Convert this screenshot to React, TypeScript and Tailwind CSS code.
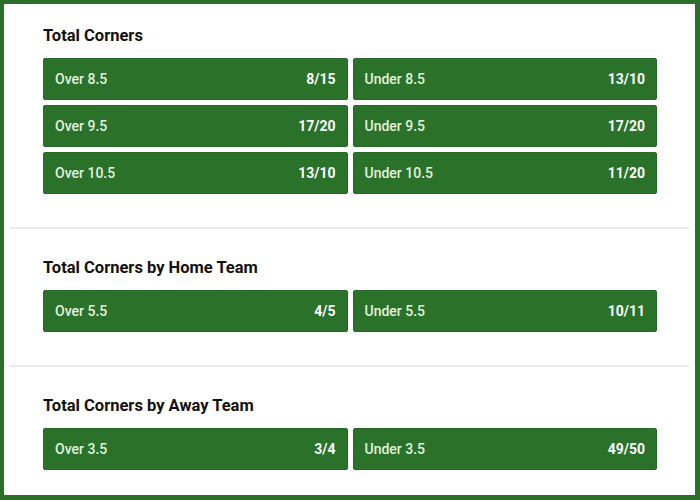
const sections = [
  {
    title: "Total Corners",
    rows: [
      ["Over 8.5", "8/15", "Under 8.5", "13/10"],
      ["Over 9.5", "17/20", "Under 9.5", "17/20"],
      ["Over 10.5", "13/10", "Under 10.5", "11/20"],
    ],
  },
  {
    title: "Total Corners by Home Team",
    rows: [["Over 5.5", "4/5", "Under 5.5", "10/11"]],
  },
  {
    title: "Total Corners by Away Team",
    rows: [["Over 3.5", "3/4", "Under 3.5", "49/50"]],
  },
];

function Odd({ label, price }: { label: string; price: string }) {
  return (
    <div className="h-[42px] flex items-center justify-between px-[11px] rounded-[2px] bg-[#2a7129] border border-[#266826]">
      <span className="text-[14px] font-medium text-[#e3f1df]">{label}</span>
      <span className="text-[14px] font-bold text-white">{price}</span>
    </div>
  );
}

export default function App() {
  return (
    <div
      className="w-[700px] h-[500px] bg-white border-l-4 border-t-4 border-r-[5px] border-b-[5px] border-[#2a7029] px-[6px] flex flex-col"
      style={{ fontFamily: "Roboto, 'Liberation Sans', sans-serif" }}
    >
      {sections.map((s, i) => (
        <div
          key={s.title}
          className={
            i === 0
              ? "pt-[20px] pb-[33px] pl-[33px] pr-[32px]"
              : i === 1
              ? "pt-[27px] pb-[33px] pl-[33px] pr-[32px] border-t-2 border-[#ebebeb]"
              : "pt-[27px] pl-[33px] pr-[32px] border-t-2 border-[#ebebeb]"
          }
        >
          <h2 className="text-[16.5px] leading-6 font-bold text-[#111] mb-[10px]">{s.title}</h2>
          <div className="grid grid-cols-2 gap-[5px]">
            {s.rows.map((r) => (
              <>
                <Odd key={r[0]} label={r[0]} price={r[1]} />
                <Odd key={r[2]} label={r[2]} price={r[3]} />
              </>
            ))}
          </div>
        </div>
      ))}
    </div>
  );
}
